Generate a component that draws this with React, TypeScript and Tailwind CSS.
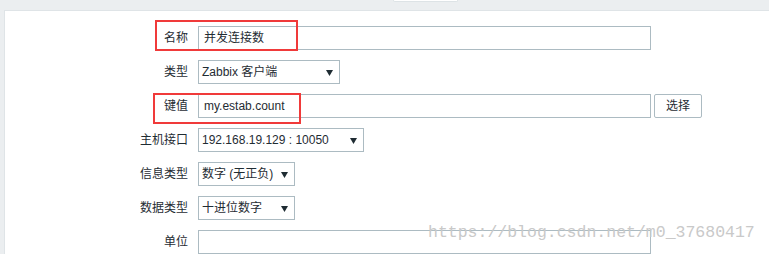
import React from 'react';

const font = { fontFamily: 'Arial, "Liberation Sans", "Noto Sans CJK SC", sans-serif' };

function Caret() {
  return (
    <svg width="7" height="7" viewBox="0 0 7 7" className="shrink-0">
      <polygon points="0,1 7,1 3.5,7" fill="#1f2c33" />
    </svg>
  );
}

function Field({ label, children }: { label: string; children: React.ReactNode }) {
  return (
    <div className="flex items-center h-6">
      <div className="w-[183px] pr-0 text-right text-[12px] text-[#1f2c33]">{label}</div>
      <div className="ml-[10px] flex items-center h-6">{children}</div>
    </div>
  );
}

function TextBox({ value, width }: { value?: string; width: string }) {
  return (
    <div className={`${width} h-6 border border-[#acbbc2] bg-white pl-[5px] flex items-center text-[12px] text-[#1f2c33]`}>
      {value}
    </div>
  );
}

function Select({ value, width }: { value: string; width: string }) {
  return (
    <div className={`${width} h-6 border border-[#acbbc2] bg-white pl-[3px] pr-[6px] flex items-center justify-between text-[12px] text-[#1f2c33]`}>
      <span>{value}</span>
      <Caret />
    </div>
  );
}

export default function App() {
  return (
    <div className="relative w-[769px] h-[254px] overflow-hidden bg-[#ebeef0] flex flex-col" style={font}>
      {/* top band with tab */}
      <div className="h-[10px] shrink-0 pl-[393px]">
        <div className="w-[65px] h-[2px] bg-white border-x border-b border-[#dde3e6] rounded-b-[2px]" />
      </div>

      {/* form panel */}
      <div className="flex-1 ml-[4px] bg-white border-l border-t border-[#dfe4e7] pt-[15px] flex flex-col gap-[10px]">
        <Field label="名称">
          <TextBox value="并发连接数" width="w-[453px]" />
        </Field>
        <Field label="类型">
          <Select value="Zabbix 客户端" width="w-[142px]" />
        </Field>
        <Field label="键值">
          <TextBox value="my.estab.count" width="w-[453px]" />
          <button className="ml-[3px] w-[48px] h-6 border border-[#acbbc2] rounded-[2px] bg-white text-[12px] text-[#1f2c33]">
            选择
          </button>
        </Field>
        <Field label="主机接口">
          <Select value="192.168.19.129 : 10050" width="w-[166px]" />
        </Field>
        <Field label="信息类型">
          <Select value="数字 (无正负)" width="w-[97px]" />
        </Field>
        <Field label="数据类型">
          <Select value="十进位数字" width="w-[97px]" />
        </Field>
        <Field label="单位">
          <TextBox width="w-[453px]" />
        </Field>
      </div>

      {/* red highlight boxes */}
      <div className="absolute left-[155px] top-[20px] w-[143px] h-[31px] border-2 border-[#f03a3a]" />
      <div className="absolute left-[153px] top-[93px] w-[148px] h-[31px] border-2 border-[#f03a3a]" />

      {/* watermark */}
      <div
        className="absolute left-[428px] top-[223px] text-[16.5px] leading-[20px] text-[#c9c9c9]"
        style={{ fontFamily: '"Liberation Mono", monospace' }}
      >
        https://blog.csdn.net/m0_37680417
      </div>
    </div>
  );
}
